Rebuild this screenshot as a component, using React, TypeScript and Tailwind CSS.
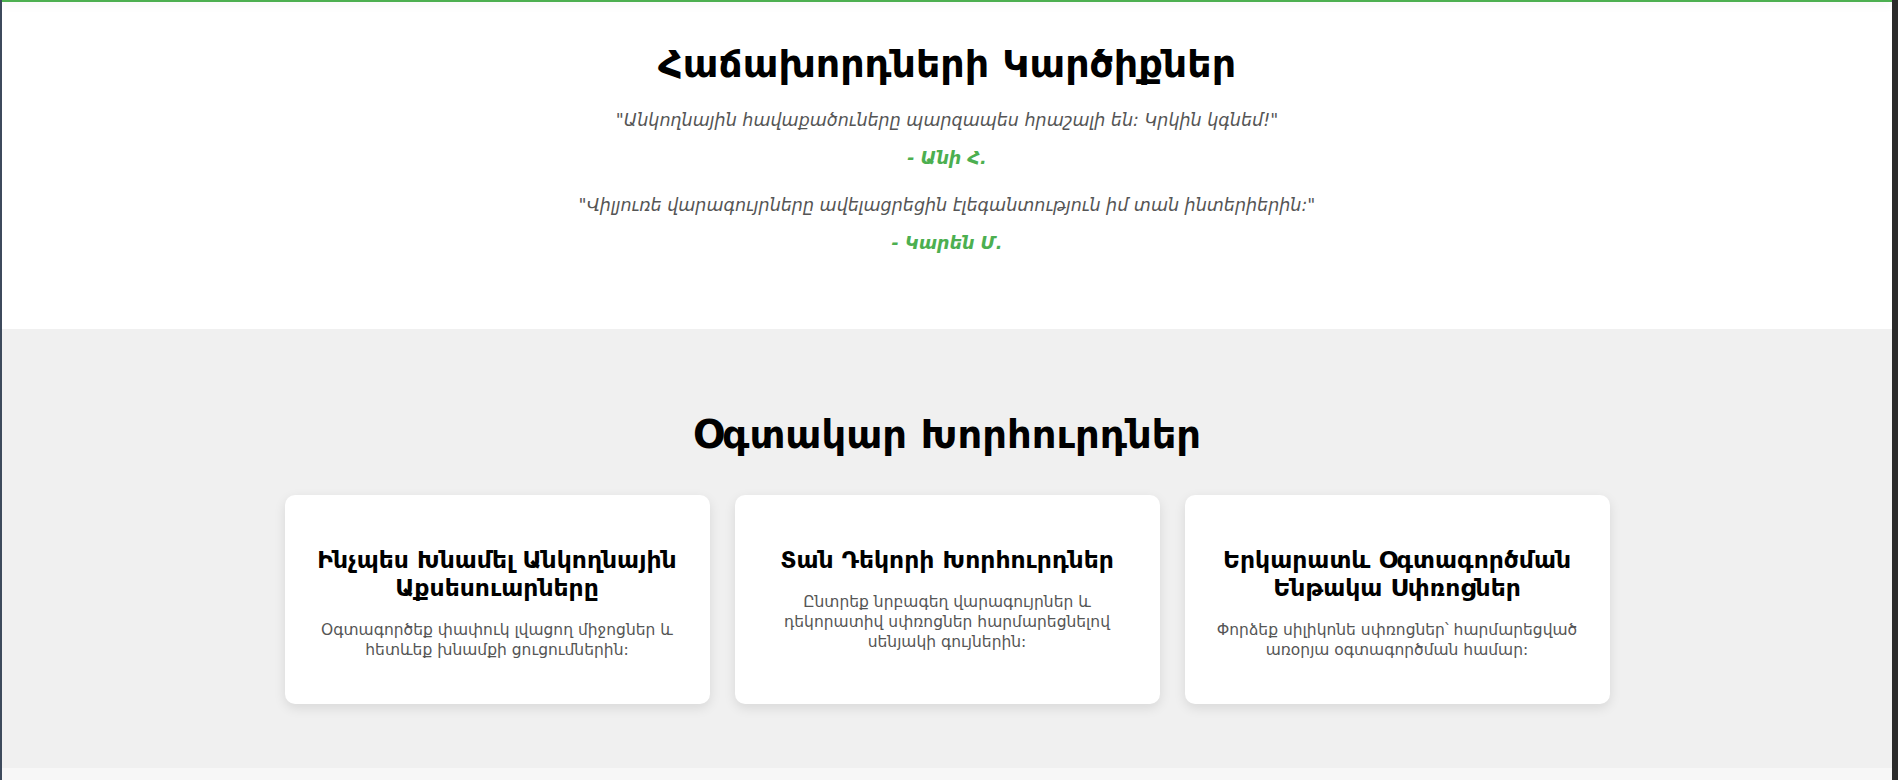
const tips = [
  {
    title: "Ինչպես Խնամել Անկողնային Աքսեսուարները",
    text: "Օգտագործեք փափուկ լվացող միջոցներ և հետևեք խնամքի ցուցումներին:",
  },
  {
    title: "Տան Դեկորի Խորհուրդներ",
    text: "Ընտրեք նրբագեղ վարագույրներ և դեկորատիվ սփռոցներ հարմարեցնելով սենյակի գույներին:",
  },
  {
    title: "Երկարատև Օգտագործման Ենթակա Սփռոցներ",
    text: "Փորձեք սիլիկոնե սփռոցներ՝ հարմարեցված առօրյա օգտագործման համար:",
  },
];

const reviews = [
  {
    quote: "\"Անկողնային հավաքածուները պարզապես հրաշալի են: Կրկին կգնեմ!\"",
    author: "- Անի Հ.",
  },
  {
    quote: "\"Վիլյուռե վարագույրները ավելացրեցին էլեգանտություն իմ տան ինտերիերին:\"",
    author: "- Կարեն Մ.",
  },
];

export default function App() {
  return (
    <div className="flex h-[780px] w-full overflow-hidden bg-white font-['DejaVu_Sans',sans-serif]">
      <div className="w-[2px] shrink-0 bg-[#3d4a5c]" />
      <div className="flex min-w-0 flex-1 flex-col">
        <div className="h-[2px] shrink-0 bg-[#4caf50] shadow-[0_2px_10px_rgba(0,0,0,0.12)]" />

        {/* testimonials */}
        <section className="flex h-[327px] shrink-0 flex-col items-center pt-[38px]">
          <h2 className="text-[38px] leading-[48px] font-bold text-black">
            Հաճախորդների Կարծիքներ
          </h2>
          <div className="mt-[14px] flex flex-col items-center">
            {reviews.map((r) => (
              <div key={r.author} className="mb-[11px] flex flex-col items-center">
                <p className="text-[17.5px] leading-[36px] italic text-[#555]">{r.quote}</p>
                <p className="mt-[2px] text-[17.5px] leading-[36px] font-bold italic text-[#4caf50]">
                  {r.author}
                </p>
              </div>
            ))}
          </div>
        </section>

        {/* tips */}
        <section className="flex flex-1 flex-col items-center bg-[#f0f0f0] pt-[82px]">
          <h2 className="text-[38.5px] leading-[48px] font-bold text-black">Օգտակար Խորհուրդներ</h2>
          <div className="mt-[36px] grid grid-cols-[425px_425px_425px] gap-[25px]">
            {tips.map((t) => (
              <div
                key={t.title}
                className="flex h-[209px] flex-col items-center rounded-[10px] bg-white px-[24px] pt-[51px] text-center shadow-[0_4px_12px_rgba(0,0,0,0.1)]"
              >
                <h3 className="text-[23.5px] leading-[28px] font-bold text-black">{t.title}</h3>
                <p className="mt-[18px] text-[15.5px] leading-[20px] text-[#555]">{t.text}</p>
              </div>
            ))}
          </div>
        </section>
        <div className="h-[12px] shrink-0 bg-[#f7f7f7]" />
      </div>
      <div className="w-[6px] shrink-0 bg-[#2b2b2b]" />
    </div>
  );
}
